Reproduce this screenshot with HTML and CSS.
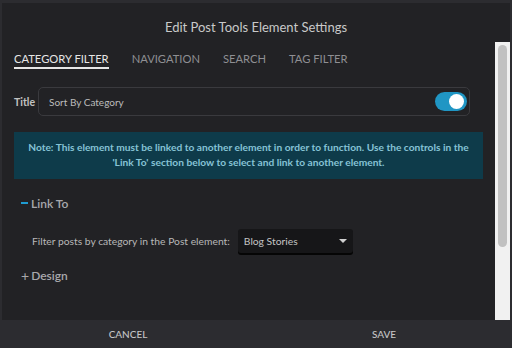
FILE: index.html
```html
<!DOCTYPE html>
<html>
<head>
<meta charset="utf-8">
<link rel="stylesheet" href="styles.css">
</head>
<body>
<div class="dialog">
  <div class="header">Edit Post Tools Element Settings</div>
  <div class="body">
    <div class="content">
      <div class="tabs">
        <span class="tab active">Category Filter</span>
        <span class="tab">Navigation</span>
        <span class="tab">Search</span>
        <span class="tab">Tag Filter</span>
      </div>
      <div class="title-row">
        <span class="label">Title</span>
        <div class="input">
          <span class="input-text">Sort By Category</span>
          <span class="toggle"><span class="knob"></span></span>
        </div>
      </div>
      <div class="note">Note: This element must be linked to another element in order to function. Use the controls in the 'Link To' section below to select and link to another element.</div>
      <div class="section-head"><span class="minus"></span>Link To</div>
      <div class="filter-row">
        <span class="filter-label">Filter posts by category in the Post element:</span>
        <div class="select"><span>Blog Stories</span><span class="caret"></span></div>
      </div>
      <div class="section-head design"><span class="plus">+</span>Design</div>
    </div>
    <div class="scrollbar"><div class="thumb"></div></div>
  </div>
</div>
<div class="footer">
  <div class="btn">CANCEL</div>
  <div class="btn">SAVE</div>
</div>
</body>
</html>
```
FILE: styles.css
```css
html, body {
  margin: 0;
  padding: 0;
}
body {
  width: 512px;
  height: 348px;
  overflow: hidden;
  background: #2c2c30;
  font-family: Lato, "Open Sans", sans-serif;
  color: #c8c8c8;
}
.dialog {
  margin: 3px 2px 0 2px;
  height: 317px;
  background: #222225;
  display: flex;
  flex-direction: column;
}
.header {
  height: 39px;
  box-sizing: border-box;
  padding-top: 16px;
  text-align: center;
  font-size: 13px;
  line-height: 16px;
  color: #c9c9c9;
}
.body {
  flex: 1;
  display: flex;
}
.content {
  flex: 1;
  padding: 0 12px;
}
.scrollbar {
  width: 16px;
  background: #f1f1f1;
  padding: 3px 3px 0 3px;
  box-sizing: border-box;
}
.thumb {
  height: 202px;
  background: #c1c1c1;
  border-radius: 5px;
}
.tabs {
  display: flex;
  gap: 23px;
  padding-top: 9px;
  height: 36px;
  box-sizing: border-box;
}
.tab {
  text-transform: uppercase;
  font-size: 11.2px;
  line-height: 15px;
  color: #8f8f93;
  height: 18px;
  box-sizing: border-box;
}
.tab.active {
  color: #e6e6e6;
  border-bottom: 2px solid #e6e6e6;
}
.title-row {
  display: flex;
  align-items: center;
  margin-top: 9px;
  gap: 3px;
}
.label {
  font-size: 10.5px;
  font-weight: bold;
  color: #c2c2c2;
}
.input {
  width: 432px;
  height: 29px;
  box-sizing: border-box;
  border: 1px solid #3a3a3e;
  border-radius: 5px;
  display: flex;
  align-items: center;
  justify-content: space-between;
  padding: 0 2px 0 10px;
}
.input-text {
  font-size: 10px;
  color: #bcbcbc;
}
.toggle {
  width: 32px;
  height: 19px;
  border-radius: 10px;
  background: #2096c4;
  position: relative;
}
.knob {
  position: absolute;
  right: 3px;
  top: 2px;
  width: 15px;
  height: 15px;
  border-radius: 50%;
  background: #ffffff;
}
.note {
  margin-top: 16px;
  width: 469px;
  height: 47px;
  box-sizing: border-box;
  background: #0e3b4a;
  color: #86c3d6;
  font-size: 10.2px;
  font-weight: bold;
  line-height: 15px;
  text-align: center;
  padding: 8px 6px 0 6px;
}
.section-head {
  margin-top: 16px;
  display: flex;
  align-items: center;
  font-size: 12px;
  font-weight: 600;
  color: #a8a8ac;
  padding-left: 7px;
  height: 16px;
}
.minus {
  width: 7px;
  height: 2px;
  background: #1f9bd0;
  margin-right: 3px;
}
.plus {
  font-weight: normal;
  font-size: 14px;
  margin-right: 2px;
}
.filter-row {
  display: flex;
  align-items: center;
  margin-top: 18px;
  padding-left: 18px;
  gap: 8px;
}
.filter-label {
  font-size: 10.3px;
  color: #b8b8b8;
}
.select {
  width: 115px;
  height: 24px;
  box-sizing: border-box;
  background: #161618;
  border-radius: 3px;
  box-shadow: 0 2px 0 #050505;
  display: flex;
  align-items: center;
  justify-content: space-between;
  padding: 0 6px;
  font-size: 10.3px;
  color: #c4c4c4;
}
.caret {
  width: 0;
  height: 0;
  border-left: 4px solid transparent;
  border-right: 4px solid transparent;
  border-top: 4px solid #d0d0d0;
}
.design {
  margin-top: 14px;
}
.footer {
  display: flex;
  height: 28px;
}
.btn {
  flex: 1;
  text-align: center;
  font-size: 10px;
  line-height: 28px;
  color: #c4c4c6;
  font-weight: 500;
}
```
